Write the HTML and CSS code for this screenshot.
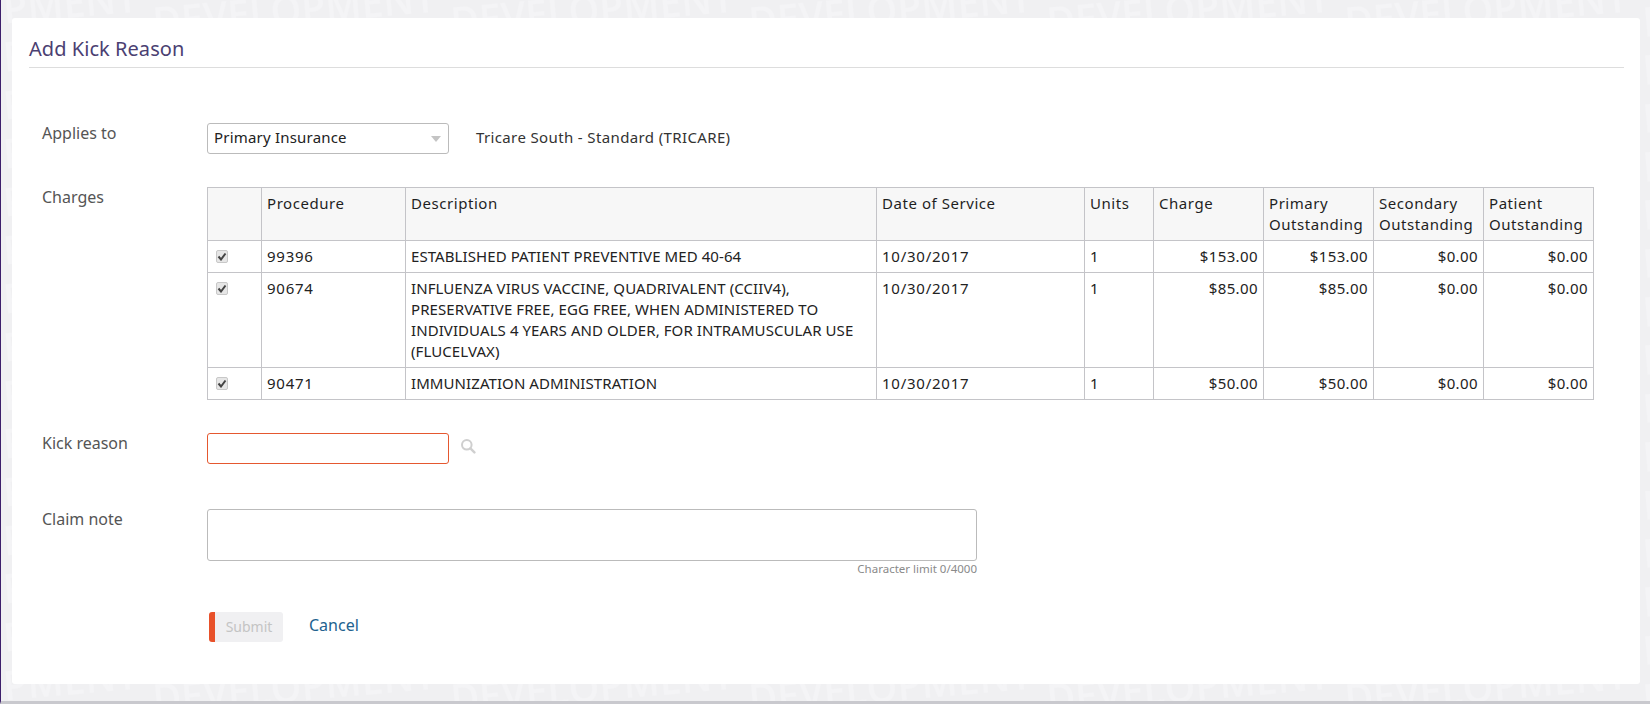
FILE: index.html
```html
<!DOCTYPE html>
<html lang="en">
<head>
<meta charset="utf-8">
<title>Add Kick Reason</title>
<link rel="stylesheet" href="styles.css">
</head>
<body>
<div class="page">
  <main class="card">
    <h1 class="title">Add Kick Reason</h1>
    <form class="form">
      <div class="row row-applies">
        <label class="label">Applies to</label>
        <div class="field field-inline">
          <select class="select"><option>Primary Insurance</option></select>
          <span class="payer">Tricare South - Standard (TRICARE)</span>
        </div>
      </div>
      <div class="row row-charges">
        <label class="label">Charges</label>
        <div class="field">
          <table class="charges">
            <colgroup>
              <col class="c-check"><col class="c-proc"><col class="c-desc"><col class="c-dos"><col class="c-units"><col class="c-money"><col class="c-money"><col class="c-money"><col class="c-money">
            </colgroup>
            <thead>
              <tr>
                <th></th><th>Procedure</th><th>Description</th><th>Date of Service</th><th>Units</th><th>Charge</th><th>Primary Outstanding</th><th>Secondary Outstanding</th><th>Patient Outstanding</th>
              </tr>
            </thead>
            <tbody>
              <tr>
                <td class="check-cell"><input class="check" type="checkbox" checked></td><td class="code">99396</td><td class="desc">ESTABLISHED PATIENT PREVENTIVE MED 40-64</td><td class="code">10/30/2017</td><td>1</td><td class="num">$153.00</td><td class="num">$153.00</td><td class="num">$0.00</td><td class="num">$0.00</td>
              </tr>
              <tr>
                <td class="check-cell"><input class="check" type="checkbox" checked></td><td class="code">90674</td><td class="desc">INFLUENZA VIRUS VACCINE, QUADRIVALENT (CCIIV4), PRESERVATIVE FREE, EGG FREE, WHEN ADMINISTERED TO INDIVIDUALS 4 YEARS AND OLDER, FOR INTRAMUSCULAR USE (FLUCELVAX)</td><td class="code">10/30/2017</td><td>1</td><td class="num">$85.00</td><td class="num">$85.00</td><td class="num">$0.00</td><td class="num">$0.00</td>
              </tr>
              <tr>
                <td class="check-cell"><input class="check" type="checkbox" checked></td><td class="code">90471</td><td class="desc">IMMUNIZATION ADMINISTRATION</td><td class="code">10/30/2017</td><td>1</td><td class="num">$50.00</td><td class="num">$50.00</td><td class="num">$0.00</td><td class="num">$0.00</td>
              </tr>
            </tbody>
          </table>
        </div>
      </div>
      <div class="row row-kick">
        <label class="label">Kick reason</label>
        <div class="field field-inline">
          <input class="input input-error" type="text">
          <svg class="search" viewBox="0 0 16 16" width="16" height="16" aria-hidden="true">
            <circle cx="6.8" cy="6.8" r="4.8" fill="none" stroke="#cfcfcf" stroke-width="2"/>
            <path d="M10.4 10.4 L14.4 14.4" stroke="#cfcfcf" stroke-width="2.4" stroke-linecap="round"/>
          </svg>
        </div>
      </div>
      <div class="row row-note">
        <label class="label">Claim note</label>
        <div class="field note-field">
          <textarea class="textarea"></textarea>
          <div class="limit">Character limit 0/4000</div>
        </div>
      </div>
      <div class="actions">
        <button class="submit" type="button" disabled>Submit</button>
        <a class="cancel" href="#">Cancel</a>
      </div>
    </form>
  </main>
</div>
</body>
</html>
```
FILE: styles.css
```css
* { box-sizing: border-box; }
html, body { margin: 0; padding: 0; }
body {
  font-family: "Noto Sans", "Open Sans", sans-serif;
  font-size: 14px;
  line-height: 21px;
  color: #333;
}
.page {
  height: 704px;
  padding: 18px 10px 17px 11px;
  border-left: 1px solid #3d1f6b;
  border-bottom: 3px solid #c9c9ce;
  background-color: #f0f0f2;
  background-image: url("data:image/svg+xml,%3Csvg xmlns='http://www.w3.org/2000/svg' width='298' height='48'%3E%3Cg font-family='Open Sans' font-size='40' font-weight='600' fill='%23f4f4f6'%3E%3Ctext x='4' y='36' transform='rotate(-5 4 36)' textLength='284' lengthAdjust='spacingAndGlyphs'%3EDEVELOPMENT%3C/text%3E%3Ctext x='4' y='84' transform='rotate(-5 4 84)' textLength='284' lengthAdjust='spacingAndGlyphs'%3EDEVELOPMENT%3C/text%3E%3C/g%3E%3C/svg%3E");
  background-size: 298px 48.36px;
  background-position: 149px 0;
}
.card {
  height: 666px;
  padding: 0 16px 0 17px;
  background: #fff;
  border-radius: 3px;
}
.title {
  margin: 0;
  height: 50px;
  padding-top: 16px;
  border-bottom: 1px solid #ddd;
  font-size: 20px;
  line-height: 29px;
  font-weight: 400;
  letter-spacing: .05px;
  color: #4b3f72;
}
.form { padding: 55px 0 0 13px; }
.row { display: flex; }
.label {
  flex: 0 0 165px;
  font-size: 16px;
  color: #555;
}
.row-applies { height: 31px; }
.row-charges { margin-top: 33px; }
.row-kick { margin-top: 33px; }
.row-note { margin-top: 45px; }
.field { flex: 1; }
.field-inline { display: flex; align-items: center; height: 31px; }
.select {
  appearance: none;
  width: 242px;
  height: 31px;
  padding: 0 6px 2px;
  border: 1px solid #bbb;
  border-radius: 3px;
  background: #fff url("data:image/svg+xml,%3Csvg xmlns='http://www.w3.org/2000/svg' width='10' height='6'%3E%3Cpath d='M0 0h10L5 6z' fill='%23c4c4c4'/%3E%3C/svg%3E") no-repeat right 7px center;
  font: inherit;
  font-size: 15px;
  letter-spacing: .2px;
  color: #222;
}
.payer {
  margin: 0 0 2px 27px;
  font-size: 15px;
  letter-spacing: .37px;
  color: #333;
}
.charges {
  width: 1387px;
  table-layout: fixed;
  border-collapse: collapse;
  color: #222;
  font-size: 15px;
}
.c-check { width: 54px; }
.c-proc { width: 144px; }
.c-desc { width: 471px; }
.c-dos { width: 208px; }
.c-units { width: 69px; }
.c-money { width: 110px; }
.charges th, .charges td {
  padding: 5px;
  border: 1px solid #c4c4c8;
  vertical-align: top;
  text-align: left;
  font-weight: 400;
}
.charges th { background: #f7f7f7; letter-spacing: .55px; color: #1f1f1f; }
.charges td.num { text-align: right; letter-spacing: .4px; }
.charges td.code { letter-spacing: .75px; }
.charges td.desc { letter-spacing: .08px; }
.check-cell { line-height: 0; }
.check {
  appearance: none;
  display: block;
  width: 12px;
  height: 13px;
  margin: 4px 0 0 3px;
  border: 1px solid #c8c8c8;
  border-radius: 2px;
  background: #e6e6e6 url("data:image/svg+xml,%3Csvg xmlns='http://www.w3.org/2000/svg' width='10' height='9'%3E%3Cpath d='M1.5 4.5L4 7.5L8.5 1.5' fill='none' stroke='%23444' stroke-width='2'/%3E%3C/svg%3E") no-repeat center;
}
.input {
  width: 242px;
  height: 31px;
  border: 1px solid #bbb;
  border-radius: 3px;
  background: #fff;
}
.input-error { border-color: #e5582f; }
.search { margin: 0 0 5px 11px; }
.note-field { width: 770px; flex: 0 0 770px; }
.textarea {
  display: block;
  width: 770px;
  height: 52px;
  border: 1px solid #bbb;
  border-radius: 3px;
  resize: none;
  background: #fff;
}
.limit {
  margin-top: 2px;
  text-align: right;
  font-size: 11.5px;
  line-height: 12px;
  color: #8a8a8a;
}
.actions {
  display: flex;
  align-items: flex-start;
  margin: 37px 0 0 167px;
}
.submit {
  width: 74px;
  height: 30px;
  padding: 0 0 2px;
  border: 0;
  border-left: 6px solid #e8512a;
  border-radius: 3px;
  background: #f0f0f2;
  font: inherit;
  font-size: 14px;
  color: #c4c4c4;
}
.cancel {
  margin: 3px 0 0 26px;
  font-size: 16px;
  color: #22628f;
  text-decoration: none;
}
```
